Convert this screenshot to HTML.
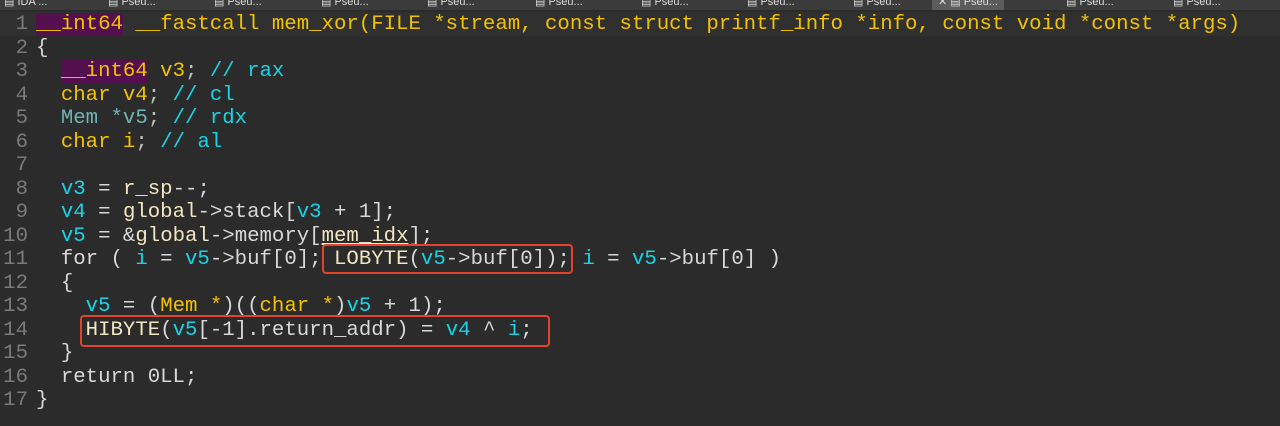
<!DOCTYPE html>
<html><head><meta charset="utf-8"><style>
body{margin:0;width:1280px;height:426px;background:#2b2b2b;overflow:hidden;position:relative;font-family:"Liberation Mono",monospace;}
.tabs{position:absolute;left:0;top:0;width:1280px;height:10px;background:#3b3b3b;}
.tab{position:absolute;top:-4px;font:11px "Liberation Sans",sans-serif;color:#ddd;height:14px;line-height:12px}
.act{position:absolute;left:932px;top:0;width:72px;height:10px;background:#5c5c5c}
.code{position:absolute;left:0;top:13px;font-size:20.7px;line-height:23.5px;white-space:pre;color:#d8d8d8}
.ln{display:inline-block;width:28px;text-align:right;color:#7a7a7a;margin-right:8px}
.hl{position:absolute;left:0;top:12px;width:1280px;height:23.5px;background:#303030}
.y{color:#f2c200}.c{color:#19d4e6}.w{color:#f2e6c0}.t{color:#6fb4b4}.p{background:#54104e}.g{color:#bdbdbd}
.box{position:absolute;border:2px solid #e2432c;border-radius:4px}
</style></head><body>
<div class="tabs"><div class="act"></div>
<span class="tab" style="left:4px">▤ IDA ...</span>
<span class="tab" style="left:108px">▤ Pseu...</span><span class="tab" style="left:214px">▤ Pseu...</span>
<span class="tab" style="left:321px">▤ Pseu...</span><span class="tab" style="left:427px">▤ Pseu...</span>
<span class="tab" style="left:535px">▤ Pseu...</span><span class="tab" style="left:641px">▤ Pseu...</span>
<span class="tab" style="left:747px">▤ Pseu...</span><span class="tab" style="left:853px">▤ Pseu...</span>
<span class="tab" style="left:938px">✕ ▤ Pseu...</span><span class="tab" style="left:1066px">▤ Pseu...</span>
<span class="tab" style="left:1173px">▤ Pseu...</span>
</div>
<div class="hl"></div>
<div class="code"><span class="ln">1</span><span class="y"><span class="p">__int64</span> __fastcall mem_xor(FILE *stream, const struct printf_info *info, const void *const *args)</span>
<span class="ln">2</span>{
<span class="ln">3</span>  <span class="y"><span class="p">__int64</span> v3</span><span class="g">;</span> <span class="c">// rax</span>
<span class="ln">4</span>  <span class="y">char v4</span><span class="g">;</span> <span class="c">// cl</span>
<span class="ln">5</span>  <span class="t">Mem *v5</span><span class="g">;</span> <span class="c">// rdx</span>
<span class="ln">6</span>  <span class="y">char i</span><span class="g">;</span> <span class="c">// al</span>
<span class="ln">7</span>
<span class="ln">8</span>  <span class="c">v3</span> = <span class="w">r_sp</span>--;
<span class="ln">9</span>  <span class="c">v4</span> = <span class="w">global</span>-&gt;stack[<span class="c">v3</span> + 1];
<span class="ln">10</span>  <span class="c">v5</span> = &amp;<span class="w">global</span>-&gt;memory[<span class="w" style="text-decoration:underline">mem_idx</span>];
<span class="ln">11</span>  for ( <span class="c">i</span> = <span class="c">v5</span>-&gt;buf[0]; <span class="w">LOBYTE</span>(<span class="c">v5</span>-&gt;buf[0]); <span class="c">i</span> = <span class="c">v5</span>-&gt;buf[0] )
<span class="ln">12</span>  {
<span class="ln">13</span>    <span class="c">v5</span> = (<span class="y">Mem *</span>)((<span class="y">char *</span>)<span class="c">v5</span> + 1);
<span class="ln">14</span>    <span class="w">HIBYTE</span>(<span class="c">v5</span>[-1].return_addr) = <span class="c">v4</span> ^ <span class="c">i</span>;
<span class="ln">15</span>  }
<span class="ln">16</span>  return 0LL;
<span class="ln">17</span>}</div>
<div class="box" style="left:322px;top:244px;width:247px;height:26px"></div>
<div class="box" style="left:80px;top:315px;width:466px;height:28px"></div>
</body></html>
